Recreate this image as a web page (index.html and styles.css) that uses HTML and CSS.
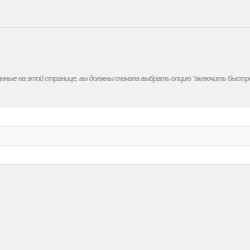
FILE: index.html
```html
<!DOCTYPE html>
<html>
<head>
<meta charset="utf-8">
<link rel="stylesheet" href="styles.css">
</head>
<body>
<div class="topbar"></div>
<div class="notice">
  <p class="notice-text">Чтобы редактировать данные на этой странице, вы должны сначала выбрать опцию "включить быстрое редактирование"</p>
</div>
<div class="table">
  <div class="row row-white"></div>
  <div class="row row-alt"></div>
  <div class="row row-white"></div>
</div>
</body>
</html>
```
FILE: styles.css
```css
html, body {
  margin: 0;
  padding: 0;
  background: #f1f1f1;
  overflow: hidden;
}
.topbar {
  height: 27px;
  background: #f1f1f1;
  border-bottom: 1px solid #e4e4e4;
}
.notice {
  height: 80px;
  display: flex;
  align-items: flex-start;
  overflow: hidden;
}
.notice-text {
  margin: 45px 0 0 -83px;
  white-space: nowrap;
  font-family: "Liberation Sans", sans-serif;
  font-style: italic;
  font-size: 7.5px;
  letter-spacing: -0.5px;
  line-height: 12px;
  color: #858585;
}
.table {
  border-bottom: 1px solid #e6e6e6;
}
.row {
  height: 18px;
}
.row-white {
  background: #ffffff;
}
.row-alt {
  background: #f9f9f9;
  border-top: 1px solid #ebebeb;
  border-bottom: 1px solid #ebebeb;
}
```
